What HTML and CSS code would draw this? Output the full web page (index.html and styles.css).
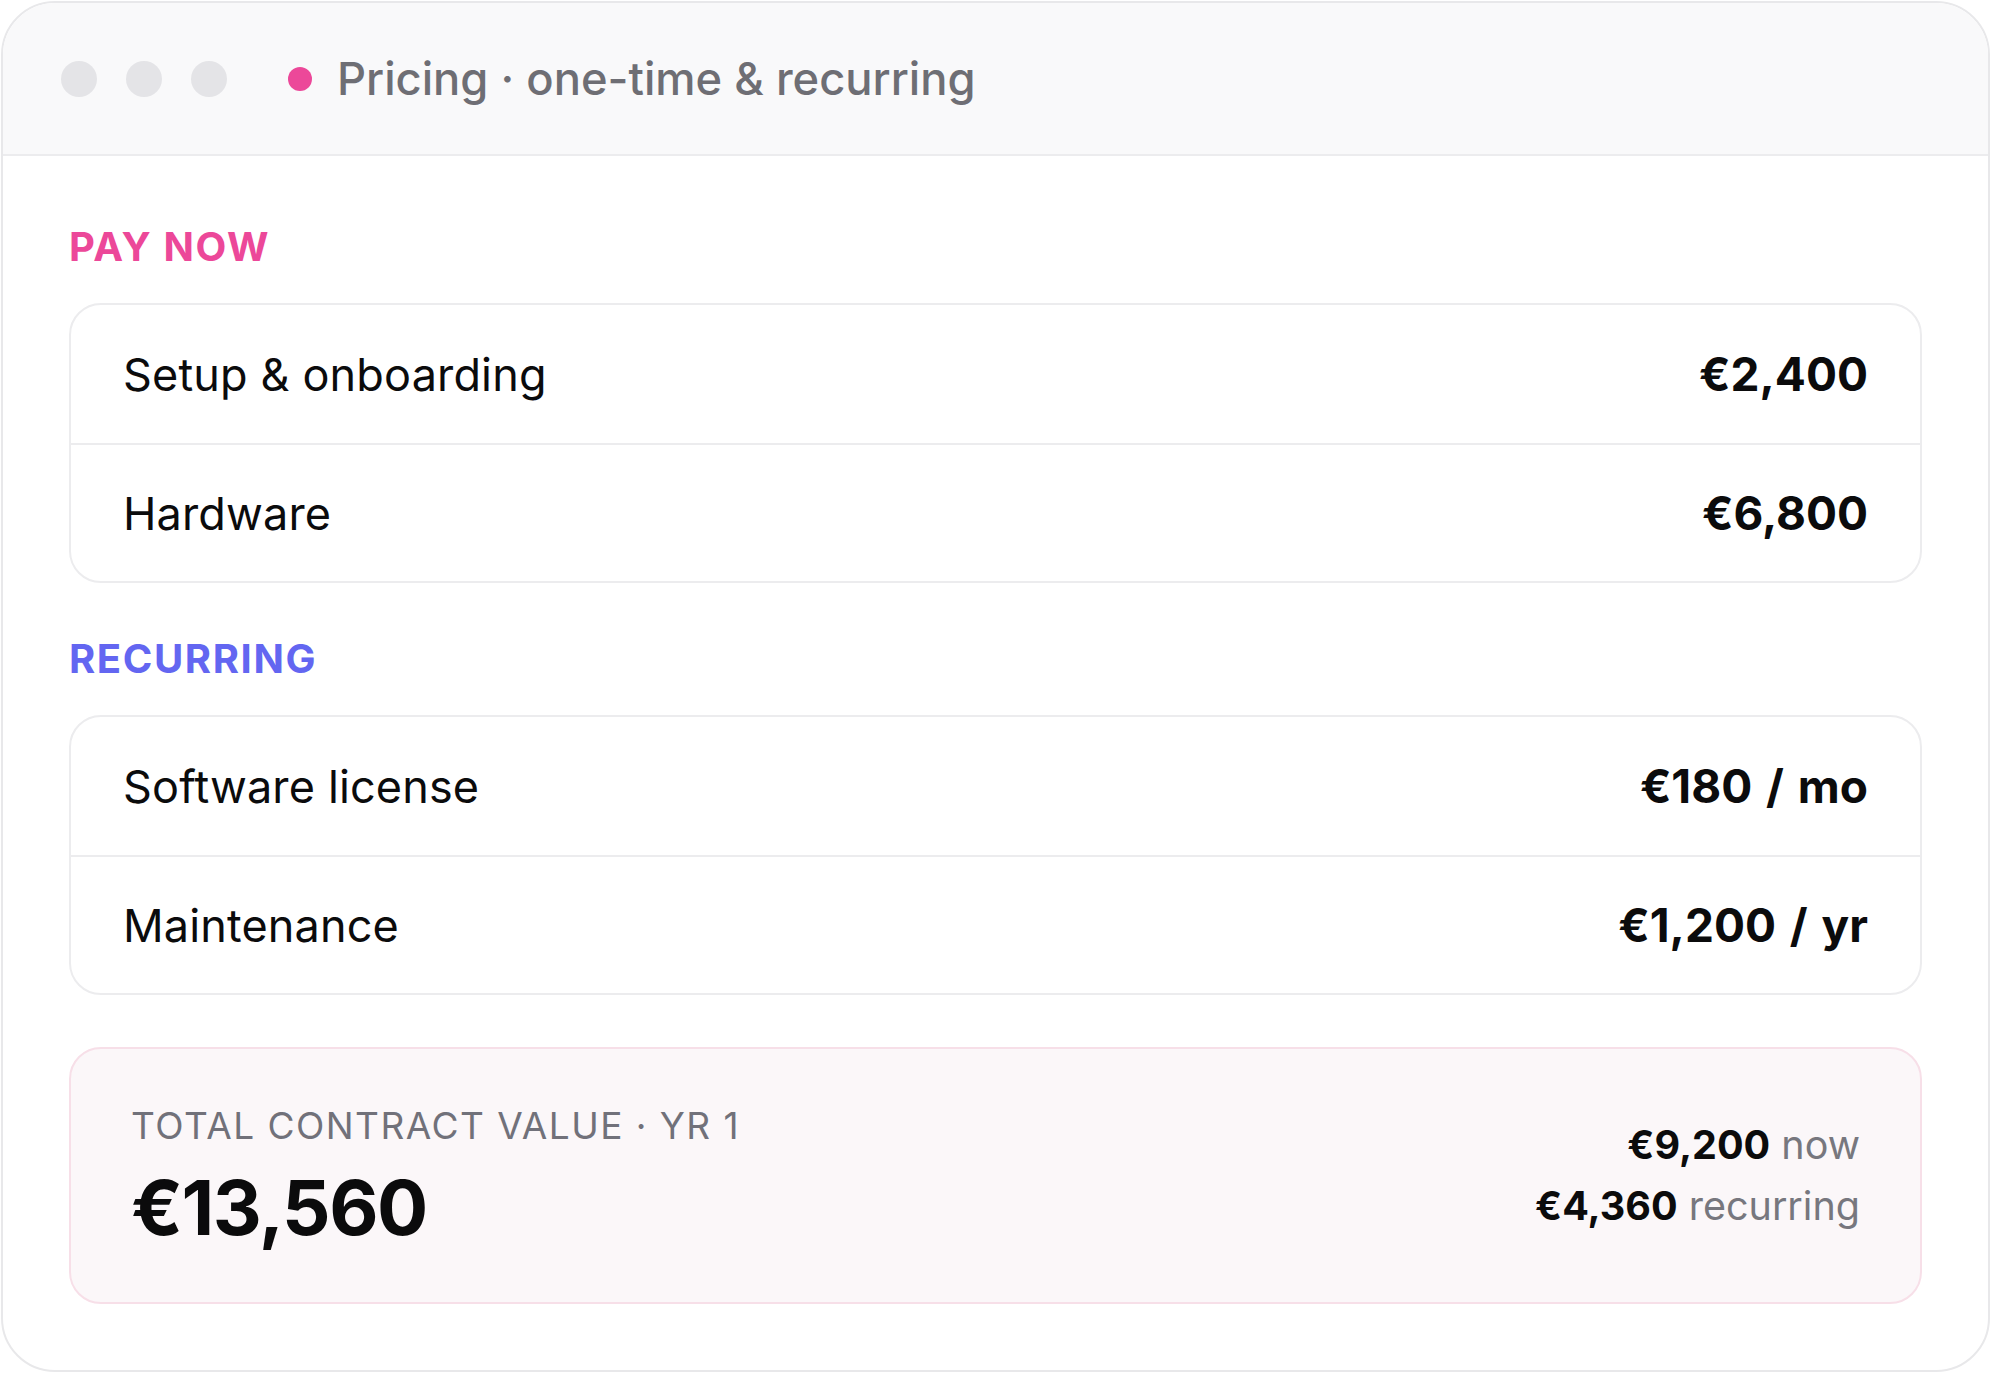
FILE: index.html
```html
<!DOCTYPE html>
<html lang="en">
<head>
<meta charset="utf-8">
<title>Pricing · one-time &amp; recurring</title>
<link rel="stylesheet" href="styles.css">
</head>
<body>
<div class="window">
  <header class="titlebar">
    <div class="lights">
      <span class="light"></span>
      <span class="light"></span>
      <span class="light"></span>
    </div>
    <span class="status-dot"></span>
    <span class="title">Pricing · one-time &amp; recurring</span>
  </header>
  <main class="content">
    <section class="section">
      <h2 class="section-label label-now">PAY NOW</h2>
      <div class="card">
        <div class="row"><span class="row-name">Setup &amp; onboarding</span><span class="row-price">€2,400</span></div>
        <div class="row"><span class="row-name">Hardware</span><span class="row-price">€6,800</span></div>
      </div>
    </section>
    <section class="section">
      <h2 class="section-label label-recurring">RECURRING</h2>
      <div class="card">
        <div class="row"><span class="row-name">Software license</span><span class="row-price">€180 / mo</span></div>
        <div class="row"><span class="row-name">Maintenance</span><span class="row-price">€1,200 / yr</span></div>
      </div>
    </section>
    <section class="total">
      <div class="total-main">
        <div class="total-label">TOTAL CONTRACT VALUE · YR 1</div>
        <div class="total-value">€13,560</div>
      </div>
      <div class="total-split">
        <div class="split-line"><strong>€9,200</strong> now</div>
        <div class="split-line"><strong>€4,360</strong> recurring</div>
      </div>
    </section>
  </main>
</div>
</body>
</html>
```
FILE: styles.css
```css
* { box-sizing: border-box; }

html, body {
  margin: 0;
  padding: 0;
  background: #ffffff;
}

body {
  font-family: "Inter", "Liberation Sans", sans-serif;
  color: #0b0b0c;
  padding: 1px;
}

.window {
  border: 2px solid #e8e8ea;
  border-radius: 54px;
  overflow: hidden;
  background: #ffffff;
}

.titlebar {
  display: flex;
  align-items: center;
  height: 153px;
  padding-left: 58px;
  background: #f9f9fa;
  border-bottom: 2px solid #ececee;
}

.lights {
  display: flex;
  gap: 29px;
}

.light {
  width: 36px;
  height: 36px;
  border-radius: 50%;
  background: #e4e4e7;
}

.status-dot {
  width: 24px;
  height: 24px;
  border-radius: 50%;
  background: #ec4899;
  margin-left: 61px;
  margin-right: 25px;
}

.title {
  font-size: 45.3px;
  font-weight: 500;
  color: #6e6e74;
}

.content {
  padding: 67px 66px 66px 66px;
  display: flex;
  flex-direction: column;
  gap: 52px;
}

.section {
  display: flex;
  flex-direction: column;
  gap: 32px;
}

.section-label {
  margin: 0;
  font-size: 40px;
  line-height: 48px;
  font-weight: 700;
  letter-spacing: 0.04em;
}

.label-now { color: #ec4899; }
.label-recurring { color: #6366f1; }

.card {
  border: 2px solid #ececee;
  border-radius: 32px;
}

.row {
  display: flex;
  align-items: center;
  justify-content: space-between;
  height: 138px;
  padding: 0 52px;
}

.row + .row {
  border-top: 2px solid #ececee;
}

.row-name {
  font-size: 45px;
  font-weight: 400;
  letter-spacing: 0.15px;
}

.row-price {
  font-size: 46px;
  font-weight: 700;
  word-spacing: 3px;
}

.total {
  display: flex;
  align-items: center;
  justify-content: space-between;
  padding: 55px 60px;
  border: 2px solid #f7dfe8;
  border-radius: 32px;
  background: #fbf7f9;
}

.total-main {
  display: flex;
  flex-direction: column;
  gap: 19px;
}

.total-label {
  font-size: 37px;
  line-height: 44px;
  color: #71717a;
  letter-spacing: 0.04em;
}

.total-value {
  font-size: 76px;
  line-height: 80px;
  font-weight: 700;
  letter-spacing: -0.02em;
}

.total-split {
  display: flex;
  flex-direction: column;
  align-items: flex-end;
}

.split-line {
  font-size: 39.5px;
  line-height: 61px;
  color: #77777e;
}

.split-line strong {
  color: #0b0b0c;
  font-weight: 700;
}
```
